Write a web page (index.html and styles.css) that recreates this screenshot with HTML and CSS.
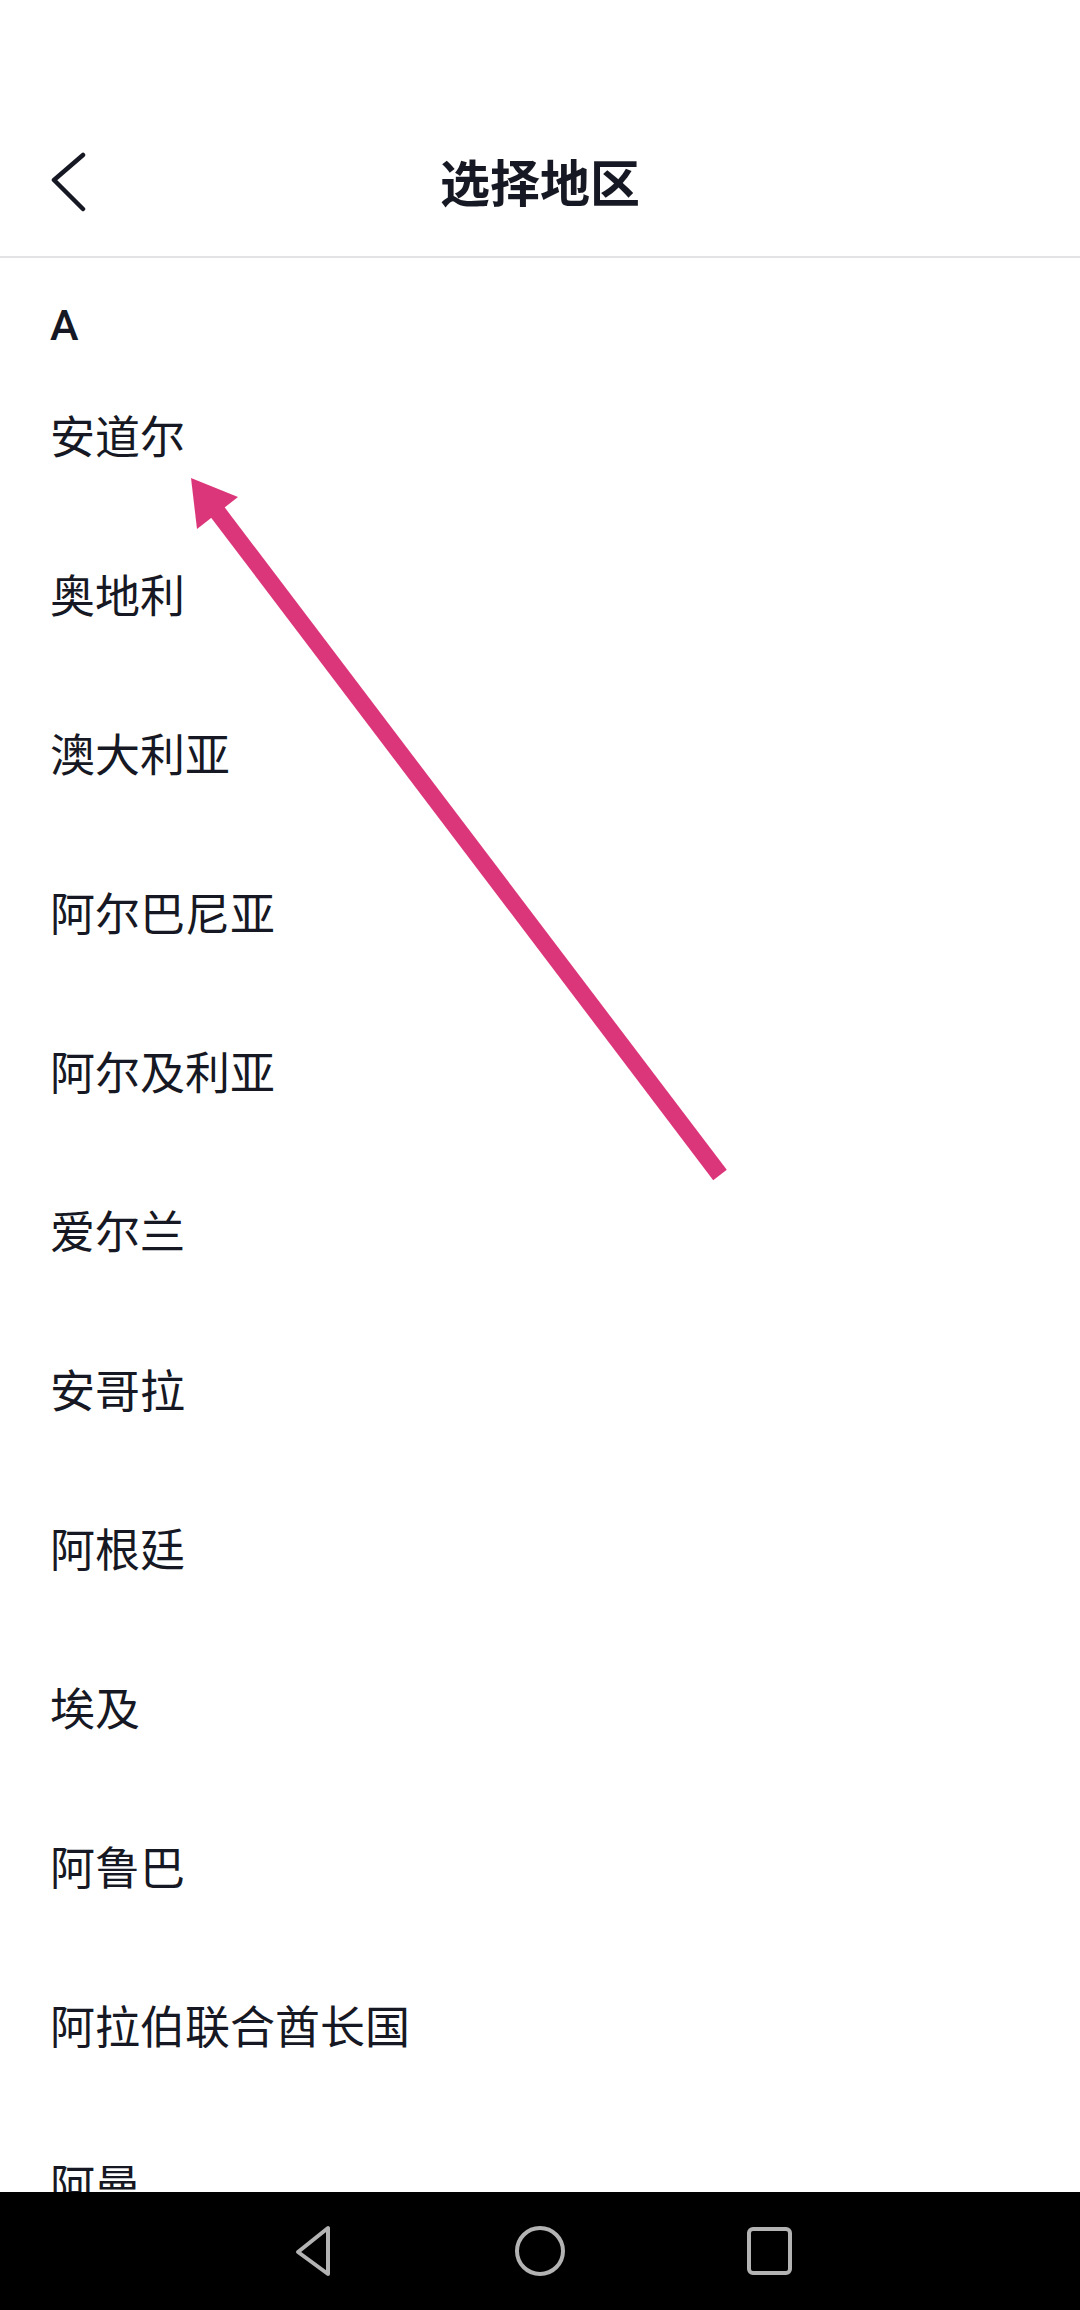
FILE: index.html
```html
<!DOCTYPE html>
<html lang="zh-CN">
<head>
    <meta charset="UTF-8">
    <meta name="viewport" content="width=device-width, initial-scale=1.0">
    <title>选择地区</title>
    <link rel="stylesheet" href="styles.css">
</head>
<body>
    <div class="page">
        <div class="status-space"></div>
        <header class="top-bar">
            <a class="back-btn" href="#">
                <svg width="40" height="60" viewBox="0 0 40 60">
                    <polyline points="33,3 4,28 33,57" fill="none" stroke="#161823" stroke-width="4.5" stroke-linecap="round" stroke-linejoin="round"/>
                </svg>
            </a>
            <h1 class="top-title">选择地区</h1>
        </header>

        <main class="region-list">
            <div class="group-letter">A</div>
            <ul class="regions">
                <li>安道尔</li>
                <li>奥地利</li>
                <li>澳大利亚</li>
                <li>阿尔巴尼亚</li>
                <li>阿尔及利亚</li>
                <li>爱尔兰</li>
                <li>安哥拉</li>
                <li>阿根廷</li>
                <li>埃及</li>
                <li>阿鲁巴</li>
                <li>阿拉伯联合酋长国</li>
                <li>阿曼</li>
            </ul>
        </main>

        <nav class="sys-nav">
            <span class="nav-key">
                <svg width="60" height="60" viewBox="0 0 60 60">
                    <path d="M48 7 L48 53 L18 31 Z" fill="none" stroke="#b3b3b3" stroke-width="4" stroke-linejoin="round"/>
                </svg>
            </span>
            <span class="nav-key">
                <svg width="60" height="60" viewBox="0 0 60 60">
                    <circle cx="30" cy="30" r="23" fill="none" stroke="#b3b3b3" stroke-width="4"/>
                </svg>
            </span>
            <span class="nav-key">
                <svg width="60" height="60" viewBox="0 0 60 60">
                    <rect x="9" y="8" width="41" height="44" rx="4" fill="none" stroke="#b3b3b3" stroke-width="4"/>
                </svg>
            </span>
        </nav>

        <!-- annotation arrow pointing at the first entry -->
        <svg class="pointer" viewBox="0 0 1080 2310">
            <line x1="216" y1="510" x2="720" y2="1175" stroke="#dc367a" stroke-width="17"/>
            <polygon points="191,478 238,497 197,529" fill="#dc367a"/>
        </svg>
    </div>
</body>
</html>
```

FILE: styles.css
```css
* {
    margin: 0;
    padding: 0;
    box-sizing: border-box;
}

body {
    background: #fff;
    font-family: "Noto Sans CJK SC", "Noto Sans", sans-serif;
    color: #161823;
}

.page {
    position: relative;
    height: 100vh;
    display: flex;
    flex-direction: column;
    overflow: hidden;
}

.status-space {
    height: 104px;
    flex-shrink: 0;
}

.top-bar {
    height: 154px;
    flex-shrink: 0;
    display: flex;
    align-items: center;
    justify-content: center;
    position: relative;
    border-bottom: 2px solid #e3e3e5;
}

.back-btn {
    position: absolute;
    left: 50px;
    top: 48px;
    display: block;
    line-height: 0;
}

.top-title {
    font-size: 50px;
    font-weight: 700;
    letter-spacing: 0;
}

.region-list {
    flex: 1;
    overflow: hidden;
}

.group-letter {
    padding: 37px 50px 0;
    height: 97px;
    font-family: Roboto, "Noto Sans", sans-serif;
    font-weight: 500;
    font-size: 43px;
    line-height: 60px;
}

.regions {
    list-style: none;
}

.regions li {
    height: 159px;
    padding: 0 50px;
    display: flex;
    align-items: center;
    font-size: 45px;
    line-height: 1;
}

.sys-nav {
    height: 118px;
    flex-shrink: 0;
    background: #000;
    display: flex;
    align-items: center;
    justify-content: center;
    gap: 170px;
}

.nav-key {
    width: 60px;
    height: 60px;
    line-height: 0;
}

.pointer {
    position: absolute;
    left: 0;
    top: 0;
    width: 1080px;
    height: 2310px;
    pointer-events: none;
}
```
